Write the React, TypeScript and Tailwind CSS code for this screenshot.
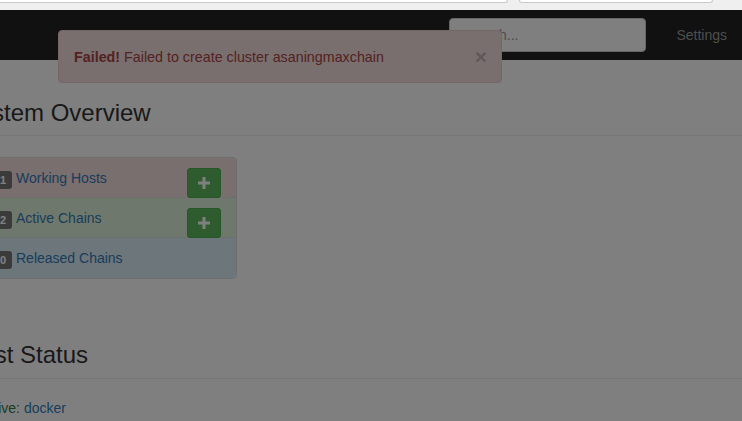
export default function App() {
  const rows = [
    { count: 1, label: 'Working Hosts', bg: 'bg-[#f2dede]', add: true },
    { count: 2, label: 'Active Chains', bg: 'bg-[#dff0d8]', add: true },
    { count: 0, label: 'Released Chains', bg: 'bg-[#d9edf7]', add: false },
  ];

  return (
    <div className="relative w-[742px] h-[421px] overflow-hidden bg-white text-[14px] leading-[20px] text-[#333] font-['Liberation_Sans',Arial,sans-serif]">
      {/* browser chrome strip */}
      <div className="h-[10px] bg-[#efefef] flex items-start">
        <div className="-ml-[4px] w-[512px] h-[3px] bg-white border border-t-0 border-[#c9c9c9] rounded-b-[3px]" />
        <div className="ml-[11px] w-[194px] h-[3px] bg-white border border-t-0 border-[#c9c9c9] rounded-b-[3px]" />
      </div>

      {/* navbar */}
      <nav className="h-[50px] bg-[#222] flex items-start justify-end">
        <div className="mt-[8px] pr-[15px]">
          <input
            className="w-[197px] h-[34px] px-[12px] bg-white border border-[#ccc] rounded-[4px] text-[14px] text-[#555] placeholder:text-[#999] outline-none"
            placeholder="Search..."
          />
        </div>
        <a className="px-[15px] pt-[15px] text-[#9d9d9d]">Settings</a>
      </nav>

      {/* page content, scrolled sideways */}
      <div className="-ml-[36px]">
        <div className="mt-[40px] pb-[9px] border-b border-[#eee]">
          <h3 className="text-[24px] leading-[1.1] font-normal">System Overview</h3>
        </div>

        <div className="ml-[14px] mt-[21px] w-[259px] border border-[#ddd] rounded-[4px] overflow-hidden divide-y divide-[#ddd]">
          {rows.map((r) => (
            <div key={r.label} className={`h-[40px] flex items-start pt-[10px] pl-[15px] pr-[15px] ${r.bg}`}>
              <span className="mt-[3px] w-[18px] h-[18px] rounded-[3px] bg-[#777] text-white text-[11px] font-bold leading-[18px] text-center">
                {r.count}
              </span>
              <a className="ml-[4px] text-[#337ab7]">{r.label}</a>
              {r.add && (
                <button className="ml-auto w-[34px] h-[30px] rounded-[3px] bg-[#5cb85c] border border-[#4cae4c] flex items-center justify-center">
                  <svg width="12" height="12" viewBox="0 0 12 12">
                    <rect x="4.5" y="0" width="3" height="12" fill="white" />
                    <rect x="0" y="4.5" width="12" height="3" fill="white" />
                  </svg>
                </button>
              )}
            </div>
          ))}
        </div>

        <div className="mt-[63px] pb-[9px] border-b border-[#eee]">
          <h3 className="text-[24px] leading-[1.1] font-normal">Host Status</h3>
        </div>

        <p className="ml-[14px] mt-[19px]">
          <span className="text-[#3c763d]">Active:</span> <a className="text-[#337ab7]">docker</a>
        </p>
      </div>

      {/* alert notification */}
      <div className="absolute left-[58px] top-[30px] w-[444px] h-[53px] bg-[#f2dede] border border-[#ebccd1] rounded-[4px] text-[#a94442] text-[14.3px] flex items-center pl-[15px] pr-[14px]">
        <span>
          <strong>Failed!</strong> Failed to create cluster asaningmaxchain
        </span>
        <span className="ml-auto text-[21px] font-bold leading-none text-black opacity-20">×</span>
      </div>

      {/* modal backdrop */}
      <div className="absolute left-0 right-0 top-[10px] bottom-0 bg-black/50" />
    </div>
  );
}
